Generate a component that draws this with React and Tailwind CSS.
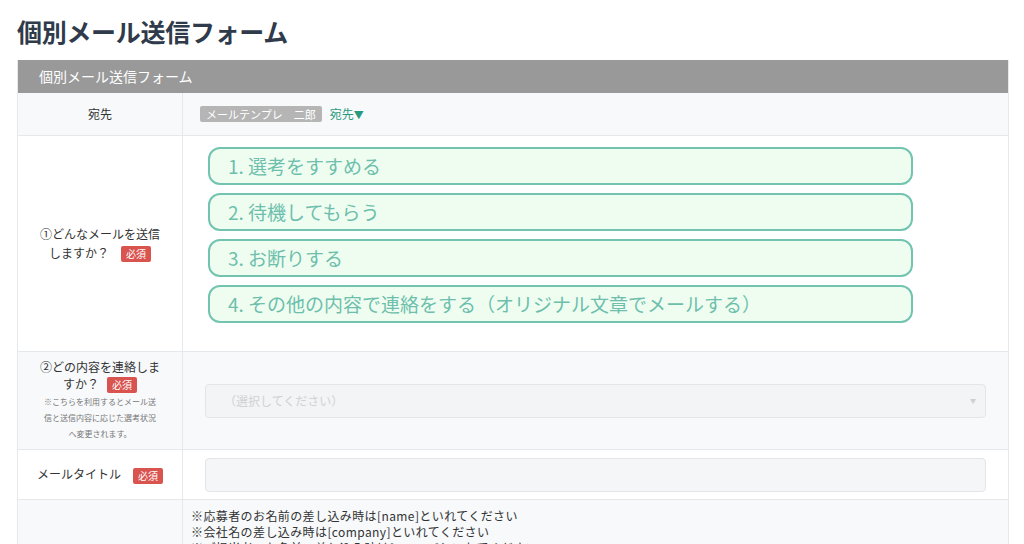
import React from 'react';

const font = { fontFamily: '"Noto Sans CJK JP", "Noto Sans", sans-serif' };

const Required = () => (
  <span className="inline-block bg-[#d9534f] text-white text-[10px] leading-[16px] px-[5px] rounded-[2px] align-middle">必須</span>
);

const options = [
  '1. 選考をすすめる',
  '2. 待機してもらう',
  '3. お断りする',
  '4. その他の内容で連絡をする（オリジナル文章でメールする）',
];

const Row = ({ label, children, shade, height }) => (
  <div className={`flex border-b border-[#e6e9ec] ${shade ? 'bg-[#f7f9fb]' : 'bg-white'} ${height}`}>
    <div className="w-[165px] shrink-0 border-r border-[#e6e9ec] flex flex-col items-center justify-center text-[12px] text-[#333] text-center px-3">
      {label}
    </div>
    <div className="flex-1 min-w-0">{children}</div>
  </div>
);

export default function App() {
  return (
    <div className="w-[1024px] h-[544px] overflow-hidden bg-white" style={font}>
      <h1 className="pl-[17px] pt-[14px] h-[60px] text-[25px] font-bold text-[#2f3b4a] leading-[34px] tracking-[-0.3px]">
        個別メール送信フォーム
      </h1>

      <div className="ml-[17px] w-[992px] border-l border-r border-[#e6e9ec]">
        <div className="h-[33px] bg-[#999999] text-white text-[14px] flex items-center pl-[21px]">
          個別メール送信フォーム
        </div>

        <Row shade label="宛先" height="h-[43px]">
          <div className="h-full flex items-center pl-[17px] gap-2">
            <span className="bg-[#b5b5b5] text-white text-[11px] leading-[16px] px-[6px] rounded-[2px]">メールテンプレ　二郎</span>
            <span className="text-[12px] text-[#2a9a7e]">宛先<span className="text-[10px]">▼</span></span>
          </div>
        </Row>

        <Row
          label={
            <>
              <span>①どんなメールを送信</span>
              <span className="mt-[1px]">しますか？<span className="ml-3"><Required /></span></span>
            </>
          }
          height="h-[216px]"
        >
          <div className="pl-[25px] pt-[11px] flex flex-col gap-[8px]">
            {options.map((o) => (
              <div
                key={o}
                className="w-[705px] h-[38px] rounded-[12px] border-2 border-[#72c4b0] bg-[#effdf1] text-[#6dbfac] text-[19px] flex items-center pl-[18px]"
              >
                {o}
              </div>
            ))}
          </div>
        </Row>

        <Row
          shade
          label={
            <>
              <span className="leading-[16px]">②どの内容を連絡しま</span>
              <span className="leading-[18px]">すか？<span className="ml-2"><Required /></span></span>
              <span className="text-[8px] leading-[16px] text-[#777] mt-[1px]">
                ※こちらを利用するとメール送<br />信と送信内容に応じた選考状況<br />へ変更されます。
              </span>
            </>
          }
          height="h-[98px]"
        >
          <div className="h-full flex items-center px-[22px]">
            <div className="w-full h-[34px] rounded-[4px] border border-[#e3e5e8] bg-[#f3f4f5] flex items-center justify-between pl-[18px] pr-[9px]">
              <span className="text-[12px] text-[#d0d2d4]">（選択してください）</span>
              <span className="text-[6px] text-[#cfcfcf]">▼</span>
            </div>
          </div>
        </Row>

        <Row
          label={
            <span>メールタイトル<span className="ml-3"><Required /></span></span>
          }
          height="h-[50px]"
        >
          <div className="h-full flex items-center px-[22px]">
            <div className="w-full h-[34px] rounded-[4px] border border-[#e3e5e8] bg-[#f5f6f7]" />
          </div>
        </Row>

        <Row shade label="" height="h-[80px]">
          <div className="pl-[8px] pt-[8px] text-[12px] leading-[16px] tracking-[0.4px] text-[#333]">
            <div>※応募者のお名前の差し込み時は[name]といれてください</div>
            <div>※会社名の差し込み時は[company]といれてください</div>
            <div>※ご担当者のお名前の差し込み時は[person]といれてください</div>
          </div>
        </Row>
      </div>
    </div>
  );
}
